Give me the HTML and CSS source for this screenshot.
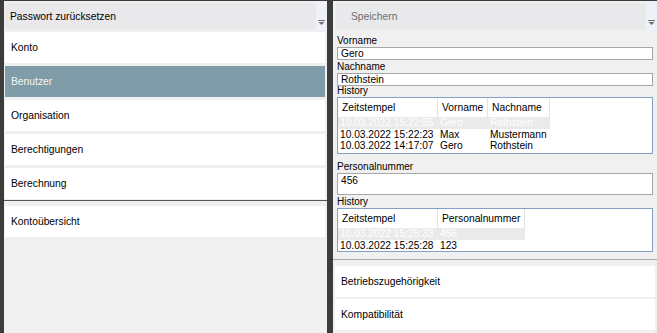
FILE: index.html
```html
<!DOCTYPE html>
<html lang="de">
<head>
<meta charset="utf-8">
<title>Benutzer</title>
<link rel="stylesheet" href="styles.css">
</head>
<body>
<div class="window">
  <div class="pane pane-left">
    <div class="toolstrip">
      <div class="ts-button">Passwort zurücksetzen</div>
      <div class="ts-overflow">
        <svg width="7" height="5" viewBox="0 0 7 5"><rect x="0" y="0" width="7" height="1" fill="#6e6e6e"/><polygon points="0.5,2 6.5,2 3.5,5" fill="#6e6e6e"/></svg>
      </div>
    </div>
    <div class="nav-top">
      <div class="nav-item">Konto</div>
      <div class="nav-item selected">Benutzer</div>
      <div class="nav-item">Organisation</div>
      <div class="nav-item">Berechtigungen</div>
      <div class="nav-item last">Berechnung</div>
    </div>
    <div class="nav-bottom">
      <div class="nav-item">Kontoübersicht</div>
    </div>
  </div>
  <div class="splitter"></div>
  <div class="pane pane-right">
    <div class="toolstrip">
      <div class="ts-button disabled">Speichern</div>
      <div class="ts-overflow">
        <svg width="7" height="5" viewBox="0 0 7 5"><rect x="0" y="0" width="7" height="1" fill="#6e6e6e"/><polygon points="0.5,2 6.5,2 3.5,5" fill="#6e6e6e"/></svg>
      </div>
    </div>
    <div class="form">
      <div class="label">Vorname</div>
      <div class="textbox">Gero</div>
      <div class="label">Nachname</div>
      <div class="textbox">Rothstein</div>
      <div class="label short">History</div>
      <div class="listview lv-names">
        <div class="lv-header">
          <div class="lv-hcell c-time">Zeitstempel</div>
          <div class="lv-hcell c-first">Vorname</div>
          <div class="lv-hcell c-last">Nachname</div>
        </div>
        <div class="lv-row selected">
          <div class="lv-cell c-time">10.03.2022 15:22:55</div>
          <div class="lv-cell c-first">Gero</div>
          <div class="lv-cell c-last">Rothstein</div>
        </div>
        <div class="lv-row">
          <div class="lv-cell c-time">10.03.2022 15:22:23</div>
          <div class="lv-cell c-first">Max</div>
          <div class="lv-cell c-last">Mustermann</div>
        </div>
        <div class="lv-row">
          <div class="lv-cell c-time">10.03.2022 14:17:07</div>
          <div class="lv-cell c-first">Gero</div>
          <div class="lv-cell c-last">Rothstein</div>
        </div>
      </div>
      <div class="label spaced">Personalnummer</div>
      <div class="textbox multi">456</div>
      <div class="label">History</div>
      <div class="listview lv-pnr">
        <div class="lv-header">
          <div class="lv-hcell c-time">Zeitstempel</div>
          <div class="lv-hcell c-pnr">Personalnummer</div>
        </div>
        <div class="lv-row selected">
          <div class="lv-cell c-time">10.03.2022 15:25:33</div>
          <div class="lv-cell c-pnr">456</div>
        </div>
        <div class="lv-row">
          <div class="lv-cell c-time">10.03.2022 15:25:28</div>
          <div class="lv-cell c-pnr">123</div>
        </div>
      </div>
    </div>
    <div class="nav-right">
      <div class="nav-item">Betriebszugehörigkeit</div>
      <div class="nav-item">Kompatibilität</div>
    </div>
  </div>
</div>
</body>
</html>
```
FILE: styles.css
```css
* { box-sizing: border-box; }
html, body { margin: 0; padding: 0; }
body {
  width: 657px;
  height: 333px;
  overflow: hidden;
  background: #3c3c3c;
  font-family: "Liberation Sans", Arial, sans-serif;
  color: #000;
}
.window {
  display: flex;
  height: 333px;
  padding-top: 1px;
  padding-left: 4px;
}
.pane {
  background: #f0f0f0;
  display: flex;
  flex-direction: column;
}
.pane-left { width: 323px; }
.splitter { width: 6px; background: #3c3c3c; }
.pane-right { flex: 1; }

.toolstrip {
  display: flex;
  height: 31px;
  flex: none;
}
.pane-right .toolstrip { height: 32px; }
.ts-button {
  margin: 2px 0 2px 1px;
  height: 27px;
  width: 311px;
  background: #e9e9eb;
  border-radius: 2px;
  font-size: 10.3px;
  display: flex;
  align-items: center;
  padding-left: 5px;
}
.pane-right .ts-button { margin-left: 3px; width: 310px; padding-left: 15px; }
.ts-button.disabled { color: #6d6d6d; }
.ts-overflow {
  flex: 1;
  background: #eef2f8;
  display: flex;
  align-items: flex-end;
  justify-content: center;
  padding-bottom: 6px;
  height: 30px;
}

.nav-item {
  background: #fff;
  height: 31px;
  margin: 0 0 3px 1px;
  width: 320px;
  padding-left: 6px;
  display: flex;
  align-items: center;
  font-size: 10.3px;
}
.nav-item.selected { background: #809ca8; color: #f4f4f4; }
.nav-item.last { margin-bottom: 1px; }
.nav-top { border-bottom: 1px solid #555; }
.nav-bottom { padding-top: 5px; flex: 1; }

.form {
  padding: 1px 4px 0 4px;
  display: flex;
  flex-direction: column;
}
.label {
  height: 13px;
  font-size: 10px;
  line-height: 13px;
}
.label.short { height: 11px; line-height: 10px; }
.label.spaced { margin-top: 6px; }
.textbox {
  height: 13px;
  background: #fff;
  border: 1px solid #a6a6a6;
  font-size: 10.2px;
  line-height: 11px;
  padding-left: 3px;
}
.textbox.multi { height: 22px; padding-top: 1px; }

.listview {
  border: 1px solid #84a0c4;
  background: #fff;
}
.lv-names { height: 57px; }
.lv-pnr { height: 44px; }
.lv-header {
  display: flex;
  height: 19px;
}
.lv-hcell {
  border-right: 1px solid #e3e3e3;
  font-size: 10.3px;
  line-height: 19px;
  padding-left: 4px;
  flex: none;
}
.lv-row {
  display: flex;
  width: max-content;
  height: 11.5px;
}
.lv-row.selected { background: #eaeaea; color: #fff; }
.lv-cell {
  font-size: 10.2px;
  line-height: 11.5px;
  padding-left: 2px;
  flex: none;
  white-space: nowrap;
}
.c-time { width: 100px; }
.c-first { width: 50px; }
.c-last { width: 62px; }
.c-pnr { width: 87px; }

.nav-right {
  margin-top: 7px;
  border-top: 1px solid #a8a8a8;
  padding-top: 6px;
}
.nav-right .nav-item { margin: 0 0 2px 2px; }
```
